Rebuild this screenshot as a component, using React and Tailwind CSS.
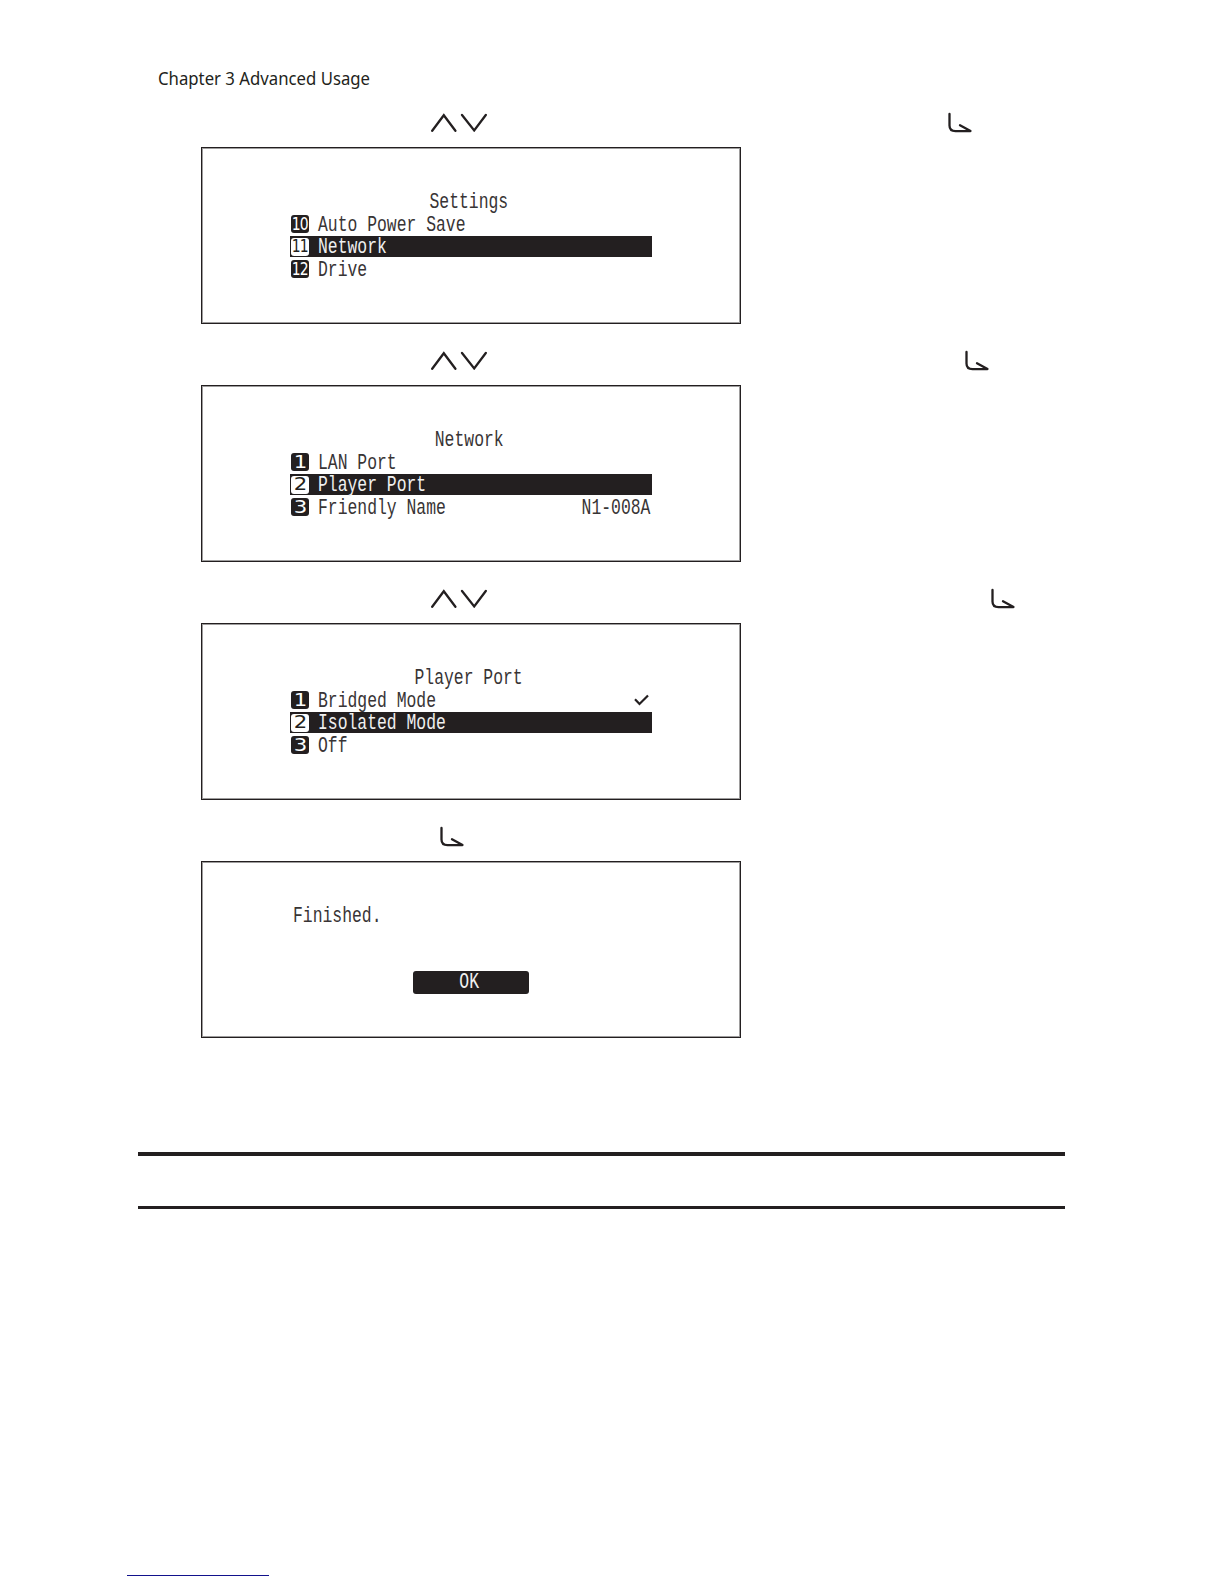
import clsx from 'clsx';

// Condensed monospace text of the player's display
function LcdText({ children, className }) {
  return (
    <span
      className={clsx(
        "inline-block whitespace-pre font-['Liberation_Mono',monospace] text-[22px] leading-[21px] translate-y-px scale-x-[0.745]",
        className,
      )}
    >
      {children}
    </span>
  );
}

function Badge({ label, selected }) {
  return (
    <span
      className={clsx(
        "flex h-[18px] w-[18px] items-center justify-center rounded-[3px] font-['DejaVu_Sans',sans-serif] text-[17px] leading-none",
        selected ? 'bg-white text-[#231f20]' : 'bg-[#231f20] text-white',
      )}
    >
      <span className={label.length > 1 ? 'scale-x-[0.82] tracking-[-1px]' : 'scale-x-[1.25]'}>{label}</span>
    </span>
  );
}

function ArrowKeys() {
  return (
    <svg width="56" height="20" viewBox="0 0 56 20" fill="none" stroke="#231f20" strokeWidth="2.3">
      <path d="M1.2 18.800 12.800 3.200 24.400 18.800" strokeLinecap="round" />
      <path d="M31 3 43.200 18.400 54.800 3" strokeLinecap="round" />
    </svg>
  );
}

function EnterKey() {
  return (
    <svg width="25" height="22" viewBox="0 0 25 22" fill="none" stroke="#231f20" strokeWidth="2.3" strokeLinecap="round" strokeLinejoin="round">
      <path d="M1.500 2v11.500q0 5.600 6 5.600H22.500L12 13.300" />
    </svg>
  );
}

function Check() {
  return (
    <svg width="15" height="12" viewBox="0 0 15 12" fill="none" stroke="#231f20" strokeWidth="2.2">
      <path d="M1 5.200 5.500 10 14 1.500" />
    </svg>
  );
}

function Screen({ children }) {
  return (
    <div className="h-[177px] w-[540px] border border-[#231f20] pt-[43px] pl-[88px] shadow-[inset_0_0_0_1px_#231f2070]">
      {children}
    </div>
  );
}

function MenuScreen({ title, items }) {
  return (
    <Screen>
      <div className="flex w-[362px] flex-col">
        <div className="flex h-[22.6px] justify-center pr-[4px] text-[#383435]">
          <LcdText>{title}</LcdText>
        </div>
        {items.map((item) => (
          <div key={item.label} className="h-[22.6px]">
            <div
              className={clsx(
                'flex h-[21px] items-center pl-px',
                item.selected ? 'bg-[#231f20] text-[#f0f0f0]' : 'text-[#383435]',
              )}
            >
              <Badge label={item.no} selected={item.selected} />
              <LcdText className="ml-[9px] origin-left">{item.label}</LcdText>
              <span className="ml-auto flex pr-[2px]">
                {item.value && <LcdText className="origin-right">{item.value}</LcdText>}
                {item.checked && <span className="pr-px"><Check /></span>}
              </span>
            </div>
          </div>
        ))}
      </div>
    </Screen>
  );
}

function App() {
  return (
    <div className="h-[1584px] w-[1224px] overflow-hidden bg-white text-[#231f20]">
      <header className="h-[86px] pt-[66px] pl-[158px]">
        <h1 className="inline-block origin-left scale-x-[0.93] whitespace-nowrap font-['Noto_Sans',sans-serif] text-[18px] leading-[24px]">
          Chapter 3 Advanced Usage
        </h1>
      </header>

      <main className="pl-[201px]">
        <div className="flex h-[61px] pt-[26px] pl-[230px]">
          <ArrowKeys />
          <span className="ml-[461px]"><EnterKey /></span>
        </div>
        <MenuScreen
          title="Settings"
          items={[
            { no: '10', label: 'Auto Power Save' },
            { no: '11', label: 'Network', selected: true },
            { no: '12', label: 'Drive' },
          ]}
        />

        <div className="flex h-[61px] pt-[26px] pl-[230px]">
          <ArrowKeys />
          <span className="ml-[478px]"><EnterKey /></span>
        </div>
        <MenuScreen
          title="Network"
          items={[
            { no: '1', label: 'LAN Port' },
            { no: '2', label: 'Player Port', selected: true },
            { no: '3', label: 'Friendly Name', value: 'N1-008A' },
          ]}
        />

        <div className="flex h-[61px] pt-[26px] pl-[230px]">
          <ArrowKeys />
          <span className="ml-[504px]"><EnterKey /></span>
        </div>
        <MenuScreen
          title="Player Port"
          items={[
            { no: '1', label: 'Bridged Mode', checked: true },
            { no: '2', label: 'Isolated Mode', selected: true },
            { no: '3', label: 'Off' },
          ]}
        />

        <div className="flex h-[61px] pt-[26px] pl-[239px]">
          <EnterKey />
        </div>
        <Screen>
          <div className="flex h-[66px] items-start pl-[3px] text-[#383435]">
            <LcdText className="origin-left">Finished.</LcdText>
          </div>
          <button className="ml-[123px] flex h-[23px] w-[116px] justify-center rounded-[3px] bg-[#231f20] pr-[3px] text-[#f0f0f0]">
            <LcdText>OK</LcdText>
          </button>
        </Screen>
      </main>

      <div className="mt-[114px] ml-[138px] h-[57px] w-[927px] border-t-4 border-b-3 border-[#231f20]" />
      <div className="mt-[366px] ml-[127px] h-px w-[142px] bg-[#12128c]" />
    </div>
  );
}

export default App;
